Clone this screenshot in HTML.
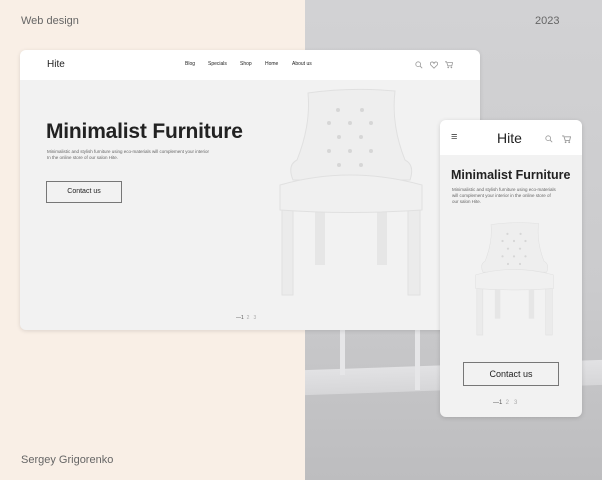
<!DOCTYPE html>
<html><head><meta charset="utf-8"><style>
*{margin:0;padding:0;box-sizing:border-box}
body{width:602px;height:480px;overflow:hidden;position:relative;font-family:"Liberation Sans",sans-serif;background:#f9efe6}
.gray{position:absolute;left:305px;top:0;width:297px;height:480px;background:linear-gradient(#d2d2d4 0%,#cbcbcd 60%,#bdbdbf 100%)}
.lbl{position:absolute;font-size:11px;color:#666}
.card{position:absolute;left:20px;top:50px;width:460px;height:280px;background:#f2f2f2;border-radius:6px;overflow:hidden;box-shadow:0 1px 4px rgba(0,0,0,.12)}
.hdr{position:absolute;left:0;top:0;width:100%;height:30px;background:#fff}
.t{position:absolute;color:#222;white-space:nowrap}
.m{position:absolute;left:440px;top:120px;width:142px;height:297px;background:#f2f2f2;border-radius:6px;overflow:hidden;box-shadow:0 1px 5px rgba(0,0,0,.15)}
.btn{position:absolute;border:1px solid #777;color:#222;text-align:center}
</style></head><body>
<div class="gray">
 <div style="position:absolute;left:0;top:365px;width:297px;height:25px;background:linear-gradient(#e2e2e4,#d6d6d8);transform:skewY(-2deg)"></div>
 <div style="position:absolute;left:35px;top:330px;width:5px;height:45px;background:#e6e6e8"></div>
 <div style="position:absolute;left:110px;top:330px;width:5px;height:60px;background:#e6e6e8"></div>
</div>
<div class="lbl" style="left:21px;top:15px">Web design</div>
<div class="lbl" style="left:535px;top:15px">2023</div>
<div class="lbl" style="left:21px;top:454px">Sergey Grigorenko</div>
<svg width="0" height="0" style="position:absolute"><defs><g id="ch">
<rect x="7" y="120" width="11" height="90" fill="#ebebeb" stroke="#e0e0e0"/>
<rect x="133" y="120" width="12" height="90" fill="#ebebeb" stroke="#e0e0e0"/>
<rect x="40" y="120" width="10" height="60" fill="#e6e6e6"/>
<rect x="102" y="120" width="10" height="60" fill="#e6e6e6"/>
<path d="M33 8 Q75 2 120 6 Q116 40 130 75 Q140 80 135 95 L18 95 Q12 80 22 75 Q36 40 33 8Z" fill="#eeeeee" stroke="#e0e0e0"/>
<path d="M5 100 Q75 80 147 100 L147 125 Q75 130 5 125Z" fill="#f0f0f0" stroke="#e0e0e0"/>
<g fill="#d6d6d6"><circle cx="63" cy="25" r="2"/><circle cx="87" cy="25" r="2"/><circle cx="54" cy="38" r="2"/><circle cx="75" cy="38" r="2"/><circle cx="96" cy="38" r="2"/><circle cx="64" cy="52" r="2"/><circle cx="86" cy="52" r="2"/><circle cx="54" cy="66" r="2"/><circle cx="75" cy="66" r="2"/><circle cx="96" cy="66" r="2"/><circle cx="64" cy="80" r="2"/><circle cx="86" cy="80" r="2"/></g>
</g>
<g id="srch" fill="none" stroke="#999" stroke-width="1"><circle cx="4" cy="4" r="3"/><path d="M6.2 6.2L9 9"/></g>
<g id="cart" fill="#999"><path d="M0 1h2l1.5 5h5l1-4H3" fill="none" stroke="#999" stroke-width="1"/><circle cx="4" cy="8" r="1"/><circle cx="8" cy="8" r="1"/></g>
</defs></svg>
<div class="card">
 <div class="hdr">
  <div class="t" style="left:27px;top:9px;font-size:10px">Hite</div>
  <div class="t" style="left:165px;top:11px;font-size:5px">Blog</div>
  <div class="t" style="left:188px;top:11px;font-size:5px">Specials</div>
  <div class="t" style="left:220px;top:11px;font-size:5px">Shop</div>
  <div class="t" style="left:245px;top:11px;font-size:5px">Home</div>
  <div class="t" style="left:272px;top:11px;font-size:5px">About us</div>
  <svg style="position:absolute;left:395px;top:11px" width="8" height="8" viewBox="0 0 10 10"><use href="#srch"/></svg>
  <svg style="position:absolute;left:410px;top:11px" width="8" height="8" viewBox="0 0 10 10"><path d="M5 9L1 5Q-0.5 2 2 1.2Q4 0.8 5 3Q6 0.8 8 1.2Q10.5 2 9 5Z" fill="none" stroke="#999"/></svg>
  <svg style="position:absolute;left:425px;top:11px" width="8" height="8" viewBox="0 0 10 10"><use href="#cart"/></svg>
 </div>
 <div class="t" style="left:26px;top:70px;font-size:21px;font-weight:bold;letter-spacing:-.2px">Minimalist Furniture</div>
 <div class="t" style="left:27px;top:99px;font-size:4.5px;color:#666;line-height:6px">Minimalistic and stylish furniture using eco-materials will complement your interior<br>In the online store of our salon Hite.</div>
 <div class="btn" style="left:26px;top:131px;width:76px;height:22px;font-size:7px;line-height:20px">Contact us</div>
 <svg style="position:absolute;left:255px;top:35px" width="150" height="215" viewBox="0 0 150 215"><use href="#ch"/></svg>
 <div class="t" style="left:216px;top:265px;font-size:5px;color:#555">—1 &nbsp;<span style="color:#aaa">2 &nbsp; 3</span></div>
</div>
<div class="m">
 <div class="hdr" style="height:35px">
  <div class="t" style="left:11px;top:11px;font-size:11px;color:#444">≡</div>
  <div class="t" style="left:57px;top:10px;font-size:14px">Hite</div>
  <svg style="position:absolute;left:105px;top:15px" width="8" height="8" viewBox="0 0 10 10"><use href="#srch"/></svg>
  <svg style="position:absolute;left:122px;top:15px" width="9" height="9" viewBox="0 0 10 10"><use href="#cart"/></svg>
 </div>
 <div class="t" style="left:11px;top:48px;font-size:12.5px;font-weight:bold">Minimalist Furniture</div>
 <div class="t" style="left:12px;top:67px;font-size:4.5px;color:#666;line-height:6px">Minimalistic and stylish furniture using eco-materials<br>will complement your interior in the online store of<br>our salon Hite.</div>
 <svg style="position:absolute;left:33px;top:100px" width="82" height="118" viewBox="0 0 150 215"><use href="#ch"/></svg>
 <div class="btn" style="left:23px;top:242px;width:96px;height:24px;font-size:9px;line-height:22px">Contact us</div>
 <div class="t" style="left:53px;top:280px;font-size:6px;color:#555">—1 &nbsp;<span style="color:#aaa">2 &nbsp; 3</span></div>
</div>
</body></html>
